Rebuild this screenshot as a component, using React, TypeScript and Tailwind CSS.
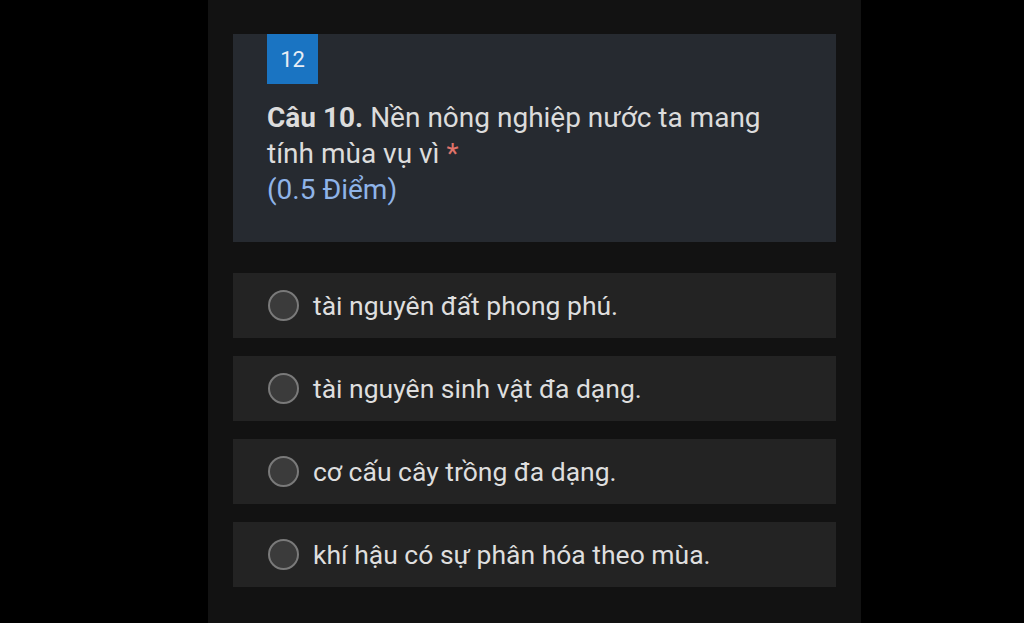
const options = [
  "tài nguyên đất phong phú.",
  "tài nguyên sinh vật đa dạng.",
  "cơ cấu cây trồng đa dạng.",
  "khí hậu có sự phân hóa theo mùa.",
];

function Radio() {
  return (
    <span className="box-border h-[31px] w-[31px] shrink-0 rounded-full border-2 border-[#7a7a7a] bg-[#3b3b3b]" />
  );
}

export default function App() {
  return (
    <main
      className="flex h-[623px] w-full overflow-hidden bg-black pl-[208px]"
      style={{ fontFamily: "Roboto, 'Noto Sans', sans-serif" }}
    >
      <div className="w-[653px] bg-[#121212] px-[25px] pt-[34px]">
        <section className="h-[208px] bg-[#262a30] pl-[34px] pr-6">
          <div className="flex h-[50px] w-[51px] items-center justify-center bg-[#1a74c2] text-[22px] text-[#e8eef5]">
            12
          </div>
          <p className="mt-[16px] max-w-[530px] text-[28px] leading-[36px] text-[#dcdcdc]">
            <span className="font-bold">Câu 10.</span> Nền nông nghiệp nước ta mang tính mùa vụ vì{" "}
            <span className="text-[#e0736a]">*</span>
          </p>
          <p className="text-[28px] leading-[36px] text-[#8fb4e8]">(0.5 Điểm)</p>
        </section>

        <ul className="mt-[31px] flex flex-col gap-[18px]">
          {options.map((o) => (
            <li key={o} className="flex h-[65px] items-center gap-[14px] bg-[#232323] pl-[35px]">
              <Radio />
              <span className="text-[26.5px] text-[#dedede]">{o}</span>
            </li>
          ))}
        </ul>
      </div>
    </main>
  );
}
